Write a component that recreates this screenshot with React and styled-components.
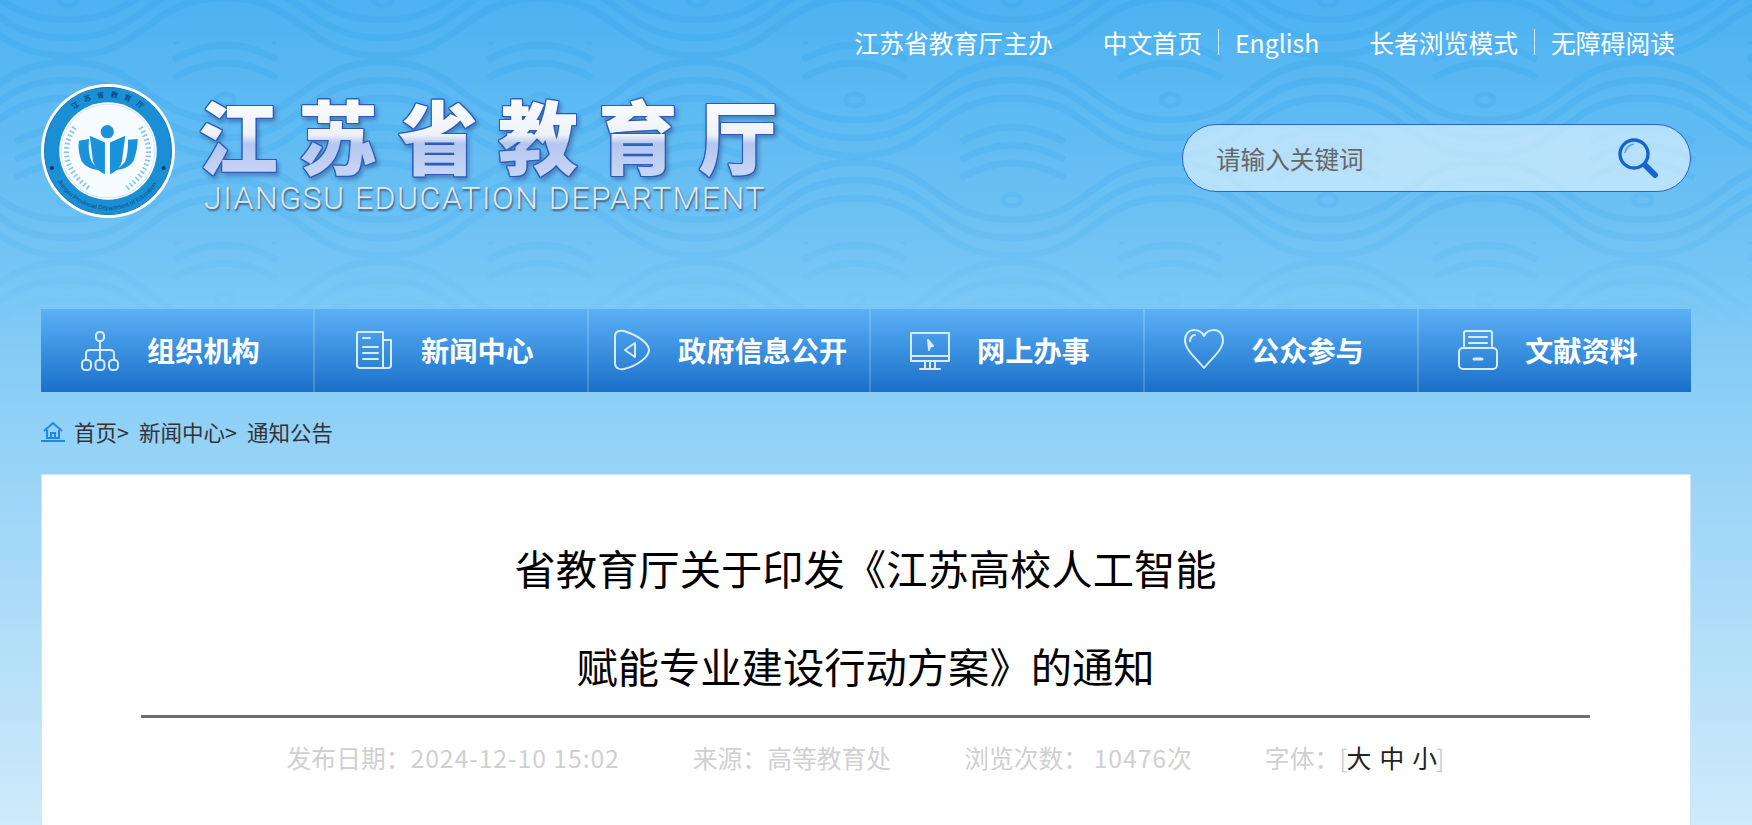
import React from 'react';
import styled, { createGlobalStyle } from 'styled-components';

const GlobalStyle = createGlobalStyle`
  html, body {
    margin: 0;
    padding: 0;
    height: 100%;
    overflow: hidden;
  }
  * { box-sizing: border-box; }
  body {
    font-family: "Noto Sans CJK SC", "Noto Sans", sans-serif;
  }
`;

const Page = styled.div`
  position: relative;
  height: 825px;
  overflow: hidden;
  padding: 0 61px 0 41px;
  background: linear-gradient(180deg, #4db2f2 0%, #6ec2f4 28%, #8fd0f7 50%, #cfeafa 100%);
`;

const WaveLayer = styled.svg`
  position: absolute;
  top: 0;
  left: 0;
  width: 100%;
  height: 330px;
`;

const Content = styled.div`
  position: relative;
`;

const TopLinks = styled.div`
  display: flex;
  justify-content: flex-end;
  align-items: center;
  height: 38px;
  margin-top: 23px;
  padding-right: 16px;
  color: #fff;
  font-size: 24.8px;
  line-height: 38px;
`;

const TopGroup = styled.div`
  display: flex;
  align-items: center;
  margin-left: 50px;
`;

const TopLink = styled.a`
  color: #fff;
  text-decoration: none;
  & + & {
    margin-left: 16px;
    padding-left: 17px;
    position: relative;
  }
  & + &::before {
    content: '';
    position: absolute;
    left: 0;
    top: 6px;
    bottom: 6px;
    width: 1px;
    background: rgba(255, 255, 255, 0.75);
  }
`;

const HeaderMain = styled.div`
  display: flex;
  justify-content: space-between;
  align-items: center;
  height: 132px;
  margin-top: 24px;
  margin-bottom: 92px;
`;

const Logo = styled.div`
  display: flex;
  align-items: center;
`;

const LogoText = styled.div`
  display: flex;
  flex-direction: column;
  margin-left: 23px;
  margin-top: 1px;
`;

const LogoName = styled.div`
  font-size: 80px;
  font-weight: 900;
  line-height: 90px;
  letter-spacing: 20px;
  white-space: nowrap;
  color: transparent;
  background: linear-gradient(180deg, #ffffff 0%, #eef2f8 52%, #b4c6f0 62%, #cad7f6 100%);
  background-clip: text;
  -webkit-background-clip: text;
  filter: drop-shadow(1.5px 0 0 #2a5cbc) drop-shadow(-1px 0 0 #2a5cbc) drop-shadow(0 1.5px 0 #2a5cbc) drop-shadow(0 -1px 0 #2a5cbc) drop-shadow(2px 3px 2px rgba(40, 60, 120, 0.45));
`;

const LogoEnglish = styled.div`
  font-family: "Roboto", "Liberation Sans", sans-serif;
  font-size: 32px;
  font-weight: 300;
  line-height: 36px;
  letter-spacing: 1.5px;
  margin-left: 6px;
  margin-top: 2px;
  white-space: nowrap;
  color: #e2e7ef;
  text-shadow: 1px 2px 2px rgba(50, 60, 90, 0.8);
`;

const SearchBox = styled.div`
  display: flex;
  align-items: center;
  justify-content: space-between;
  width: 509px;
  height: 68px;
  margin-top: 14px;
  padding: 0 30px 0 33px;
  border: 1px solid #2c62c2;
  border-radius: 34px;
  background: rgba(222, 242, 255, 0.68);
`;

const SearchHint = styled.span`
  color: #666;
  font-size: 24.6px;
`;

const Nav = styled.nav`
  display: grid;
  grid-template-columns: 272px 274px 282px 274px 274px 1fr;
  height: 83px;
  background: linear-gradient(180deg, #5bb0f6 0%, #1a70c8 100%);
`;

const NavItem = styled.a`
  display: flex;
  align-items: center;
  padding-left: ${({ $pad }) => $pad}px;
  padding-bottom: 2px;
  color: #fff;
  font-size: 28.2px;
  font-weight: 700;
  white-space: nowrap;
  border-left: ${({ $first }) => ($first ? 'none' : '2px solid rgba(255, 255, 255, 0.18)')};
`;

const NavIcon = styled.svg`
  flex: 0 0 44px;
  width: 44px;
  height: 44px;
  margin-right: 25px;
  fill: none;
  stroke: #d8ebff;
  stroke-width: 2;
  stroke-linejoin: round;
  stroke-linecap: round;
`;

const Crumbs = styled.div`
  display: flex;
  align-items: center;
  height: 82px;
  padding-bottom: 4px;
  color: #333;
  font-size: 21.5px;
`;

const CrumbLink = styled.span`
  margin-right: 10px;
`;

const HomeIcon = styled.svg`
  width: 24px;
  height: 24px;
  margin-right: 9px;
  fill: none;
  stroke: #2186e4;
  stroke-width: 2;
`;

const Card = styled.main`
  height: 360px;
  padding: 43px 100px 0 99px;
  background: #fff;
  border: 1px solid #cfe6f7;
  border-bottom: none;
`;

const Title = styled.h1`
  margin: 0;
  height: 200px;
  color: #000;
  font-size: 41.3px;
  font-weight: 400;
  line-height: 98px;
  text-align: center;
  border-bottom: 3px solid #6e6e6e;
`;

const Meta = styled.div`
  display: flex;
  justify-content: center;
  gap: 73px;
  margin-top: 17px;
  color: #d0d0d0;
  font-size: 24.8px;
  line-height: 44px;
`;

const MetaNumber = styled.span`
  letter-spacing: 0.9px;
`;

const FontSizes = styled.span`
  display: inline-flex;
  gap: 8px;
  margin: 0 -1px;
  color: #222;
`;

const wave = (y, h) => `M0 ${y} C80 ${y} 78 ${y - h} 157.5 ${y - h} S235 ${y} 315 ${y}`;

// one row of wave bands with the small eye and its arcs in the hollow
const WaveRow = ({ shift }) => (
  <g transform={`translate(${shift} 0)`}>
    {[18, 36, 54].map(off => (
      <path key={off} d={wave(off + 60, 58)} />
    ))}
    {[-60, -42, -24].map(off => (
      <path key={off} d={`M-52 ${off + 60} Q0 ${off + 30} 52 ${off + 60}`} />
    ))}
    <ellipse cx="0" cy="58" rx="9" ry="6" strokeWidth="5" />
  </g>
);

const Waves = () => (
  <WaveLayer aria-hidden="true">
    <defs>
      <linearGradient id="fade" x1="0" y1="0" x2="0" y2="1">
        <stop offset="0" stopColor="#fff" />
        <stop offset="0.55" stopColor="#fff" stopOpacity="0.75" />
        <stop offset="1" stopColor="#fff" stopOpacity="0" />
      </linearGradient>
      <mask id="fadeMask">
        <rect width="100%" height="100%" fill="url(#fade)" />
      </mask>
      <pattern id="sea" x="225" y="42" width="315" height="200" patternUnits="userSpaceOnUse">
        <g fill="none" stroke="#2f9fea" strokeOpacity="0.22" strokeWidth="7">
          <g>
            <WaveRow shift={-315} />
            <WaveRow shift={0} />
            <WaveRow shift={315} />
          </g>
          <g transform="translate(0 100)">
            <WaveRow shift={157.5} />
            <WaveRow shift={-157.5} />
          </g>
          <g transform="translate(0 -100)">
            <WaveRow shift={157.5} />
            <WaveRow shift={-157.5} />
          </g>
        </g>
      </pattern>
    </defs>
    <rect width="100%" height="100%" fill="url(#sea)" mask="url(#fadeMask)" />
  </WaveLayer>
);

const Emblem = () => (
  <svg width="134" height="134" viewBox="0 0 132 132">
    <circle cx="66" cy="66" r="66" fill="#fff" />
    <circle cx="66" cy="66" r="62.5" fill="#1a8fd6" stroke="#1477bb" />
    <circle cx="66" cy="66" r="48" fill="#fff" />
    <circle cx="66" cy="66" r="46" fill="#f6fbff" stroke="#cfe8f8" />
    <defs>
      <path id="ringTop" d="M13 66 A53 53 0 0 1 119 66" />
      <path id="ringBottom" d="M8 66 A58 58 0 0 0 124 66" />
    </defs>
    <text fontSize="7" fill="#0a4d85" fontWeight="700" letterSpacing="6">
      <textPath href="#ringTop" startOffset="28%">江苏省教育厅</textPath>
    </text>
    <text fontSize="6" fill="#0a4d85" fontFamily="Liberation Sans, sans-serif">
      <textPath href="#ringBottom" startOffset="17%">Jiangsu Provincial Department of Education</textPath>
    </text>
    <circle cx="10.7" cy="82.7" r="2" fill="#06375f" />
    <circle cx="120.7" cy="82.7" r="2" fill="#06375f" />
    <g fill="#1a93dc">
      <circle cx="65.3" cy="47" r="6.5" />
      <path d="M48 51 L63 57.7 V89 Q53 84 51.3 76 Z" />
      <path d="M83 51 L68 57.7 V89 Q78 84 79.7 76 Z" />
      <path d="M37.3 56 L47.3 54.3 Q46 68 49.7 76 Q53 82 59.7 85 Q45 84 40 76 Q36 66 37.3 56Z" />
      <path d="M95.3 54.3 L85.7 55 Q86 68 83 76 Q79 82 71.3 85 Q86 84 91 76 Q95 66 95.3 54.3Z" />
    </g>
    <g stroke="#86c4e8" strokeWidth="5" fill="none" strokeDasharray="1.6 2.6">
      <path d="M33 42.7 Q12 76 47.3 102.7" />
      <path d="M98 42.7 Q119 76 84.7 102.7" />
    </g>
  </svg>
);

const SearchIcon = () => (
  <svg width="44" height="44" viewBox="0 0 44 44" fill="none">
    <circle cx="18" cy="18" r="14" stroke="#1465cf" strokeWidth="3.4" />
    <path d="M9 17 A10 10 0 0 1 18 8" stroke="#5a9ee6" strokeWidth="1.6" />
    <path d="M29 29 L39 39" stroke="#1465cf" strokeWidth="6" strokeLinecap="round" />
  </svg>
);

const navItems = [
  {
    label: '组织机构', pad: 37,
    icon: (
      <>
        <rect x="18" y="4" width="8" height="9" rx="3.5" />
        <path d="M22 13V28M8 32V26Q8 22 12 22H32Q36 22 36 26V32M22 22V32" />
        <rect x="4" y="32" width="9" height="10" rx="3.5" />
        <rect x="17.5" y="32" width="9" height="10" rx="3.5" />
        <rect x="31" y="32" width="9" height="10" rx="3.5" />
      </>
    )
  },
  {
    label: '新闻中心', pad: 37,
    icon: (
      <>
        <path d="M6 4H31V40H8Q5 40 5 37V5Z" />
        <path d="M31 12H39V37Q39 40 36 40H31" />
        <path d="M11 10H18M11 19H26M11 25H26M11 31H26" />
      </>
    )
  },
  {
    label: '政府信息公开', pad: 20,
    icon: (
      <>
        <path d="M6 8C6 3 11 2 15 3C28 7 40 15 40 22C40 29 28 38 15 41C10 42 6 40 6 35Z" />
        <path d="M26 15V29L16 22Z" />
      </>
    )
  },
  {
    label: '网上办事', pad: 37,
    icon: (
      <>
        <path d="M3 5H41V33H3Z" />
        <path d="M3 28H41M22 33V41M12 41H32M17 33V41M27 33V41" />
        <path d="M20 12L25 18L22 18.5L21 22Z" fill="#d8ebff" />
      </>
    )
  },
  {
    label: '公众参与', pad: 37,
    icon: (
      <>
        <path d="M22 40C14 30 3 22 3 12C3 6 7 2 12 2C16 2 20 4 22 8C24 4 28 2 32 2C37 2 41 6 41 12C41 22 30 30 22 40Z" />
        <path d="M8 13C8 10 10 7 13 7" />
      </>
    )
  },
  {
    label: '文献资料', pad: 37,
    icon: (
      <>
        <path d="M8 18V5Q8 3 10 3H34Q36 3 36 5V18" />
        <path d="M13 9H31M13 15H31" />
        <rect x="3" y="20" width="38" height="21" rx="4" />
        <path d="M18 31H26" strokeWidth="3" />
      </>
    )
  }
];

const App = () => {
  return (
    <Page>
      <GlobalStyle />
      <Waves />
      <Content>
        <TopLinks>
          <TopLink>江苏省教育厅主办</TopLink>
          <TopGroup>
            <TopLink>中文首页</TopLink>
            <TopLink>English</TopLink>
          </TopGroup>
          <TopGroup>
            <TopLink>长者浏览模式</TopLink>
            <TopLink>无障碍阅读</TopLink>
          </TopGroup>
        </TopLinks>

        <HeaderMain>
          <Logo>
            <Emblem />
            <LogoText>
              <LogoName>江苏省教育厅</LogoName>
              <LogoEnglish>JIANGSU EDUCATION DEPARTMENT</LogoEnglish>
            </LogoText>
          </Logo>
          <SearchBox>
            <SearchHint>请输入关键词</SearchHint>
            <SearchIcon />
          </SearchBox>
        </HeaderMain>

        <Nav>
          {navItems.map((item, i) => (
            <NavItem key={item.label} $pad={item.pad} $first={i === 0}>
              <NavIcon viewBox="0 0 44 44">{item.icon}</NavIcon>
              {item.label}
            </NavItem>
          ))}
        </Nav>

        <Crumbs>
          <HomeIcon viewBox="0 0 24 24">
            <path d="M3 12L12 4L21 12M6 11V19H18V11M10 19V14H14V19M0 22H24" />
          </HomeIcon>
          <CrumbLink>首页&gt;</CrumbLink>
          <CrumbLink>新闻中心&gt;</CrumbLink>
          <CrumbLink>通知公告</CrumbLink>
        </Crumbs>

        <Card>
          <Title>
            省教育厅关于印发《江苏高校人工智能
            <br />
            赋能专业建设行动方案》的通知
          </Title>
          <Meta>
            <span>发布日期：<MetaNumber>2024-12-10 15:02</MetaNumber></span>
            <span>来源：高等教育处</span>
            <span>浏览次数： <MetaNumber>10476</MetaNumber>次</span>
            <span>
              字体：[
              <FontSizes>
                <span>大</span>
                <span>中</span>
                <span>小</span>
              </FontSizes>
              ]
            </span>
          </Meta>
        </Card>
      </Content>
    </Page>
  );
};

export default App;
